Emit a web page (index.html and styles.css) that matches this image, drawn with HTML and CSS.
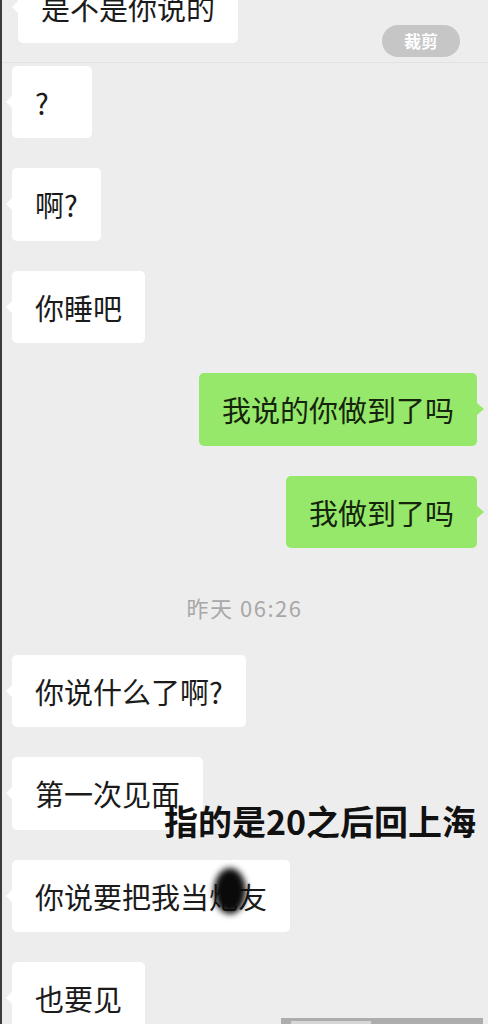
FILE: index.html
```html
<!DOCTYPE html>
<html lang="zh">
<head>
<meta charset="utf-8">
<link rel="stylesheet" href="styles.css">
</head>
<body>
<div class="screen">
  <div class="top-seg">
    <div class="bubble left top-bubble">是不是你说的</div>
    <div class="pill">裁剪</div>
  </div>
  <div class="chat">
    <div class="row"><div class="bubble left q">?</div></div>
    <div class="row"><div class="bubble left">啊?</div></div>
    <div class="row"><div class="bubble left">你睡吧</div></div>
    <div class="row right-row"><div class="bubble right">我说的你做到了吗</div></div>
    <div class="row right-row"><div class="bubble right">我做到了吗</div></div>
    <div class="time">昨天 06:26</div>
    <div class="row"><div class="bubble left">你说什么了啊?</div></div>
    <div class="row"><div class="bubble left">第一次见面</div></div>
    <div class="row"><div class="bubble left">你说要把我当<span class="blotted">炮</span>友</div></div>
    <div class="row"><div class="bubble left">也要见</div></div>
  </div>
  <div class="caption">指的是20之后回上海</div>
  <div class="bottom-strip"><span class="strip-inner"></span></div>
</div>
</body>
</html>
```

FILE: styles.css
```css
html, body {
  margin: 0;
  padding: 0;
}
body {
  width: 488px;
  height: 1024px;
  overflow: hidden;
  background: #ededed;
  font-family: "Noto Sans CJK SC", "Noto Sans", sans-serif;
}
.screen {
  position: relative;
  width: 488px;
  height: 1024px;
  overflow: hidden;
  background: #ededed;
  border-left: 2px solid #3c3c3c;
  box-sizing: border-box;
}
.top-seg {
  height: 63px;
  border-bottom: 1px solid #e2e2e2;
  display: flex;
  justify-content: space-between;
  align-items: flex-start;
  padding: 0 28px 0 16px;
  box-sizing: border-box;
}
.top-bubble {
  margin-top: -29px;
}
.pill {
  margin-top: 25px;
  width: 78px;
  height: 32px;
  border-radius: 16px;
  background: #c6c6c6;
  color: #fff;
  font-size: 17px;
  font-weight: 700;
  line-height: 32px;
  text-align: center;
}
.chat {
  display: flex;
  flex-direction: column;
  gap: 30px;
  padding: 3px 11px 0 10px;
}
.row {
  display: flex;
}
.right-row {
  justify-content: flex-end;
}
.bubble {
  position: relative;
  padding: 22px 23px;
  font-size: 29px;
  line-height: 28.4px;
  color: #1b1b1b;
  border-radius: 5px;
  white-space: nowrap;
}
.bubble.left {
  background: #fff;
}
.bubble.left::before {
  content: "";
  position: absolute;
  left: -6px;
  top: 30px;
  border-style: solid;
  border-width: 6px 6px 6px 0;
  border-color: transparent #fff transparent transparent;
}
.bubble.right {
  background: #95e86a;
  color: #15240c;
}
.bubble.right::after {
  content: "";
  position: absolute;
  right: -7px;
  top: 30px;
  border-style: solid;
  border-width: 6px 0 6px 7px;
  border-color: transparent transparent transparent #95e86a;
}
.bubble.q {
  min-width: 34px;
}
.time {
  margin: 17px 0 6px;
  text-align: center;
  font-size: 22px;
  line-height: 24px;
  color: #a8a8a8;
  letter-spacing: 1.5px;
}
.blotted {
  position: relative;
}
.blotted::after {
  content: "";
  position: absolute;
  left: 5px;
  top: -7px;
  width: 32px;
  height: 46px;
  border-radius: 50%;
  background: #0a0a0a;
  filter: blur(3px);
}
.caption {
  position: absolute;
  left: 162px;
  top: 801px;
  font-size: 34px;
  line-height: 40px;
  font-weight: 700;
  color: #111;
  letter-spacing: 0;
}
.bottom-strip {
  position: absolute;
  left: 279px;
  top: 1018px;
  width: 202px;
  height: 6px;
  background: #adadad;
}
.strip-inner {
  position: absolute;
  left: 10px;
  top: 3px;
  width: 80px;
  height: 3px;
  background: #d6d6d6;
}
```
